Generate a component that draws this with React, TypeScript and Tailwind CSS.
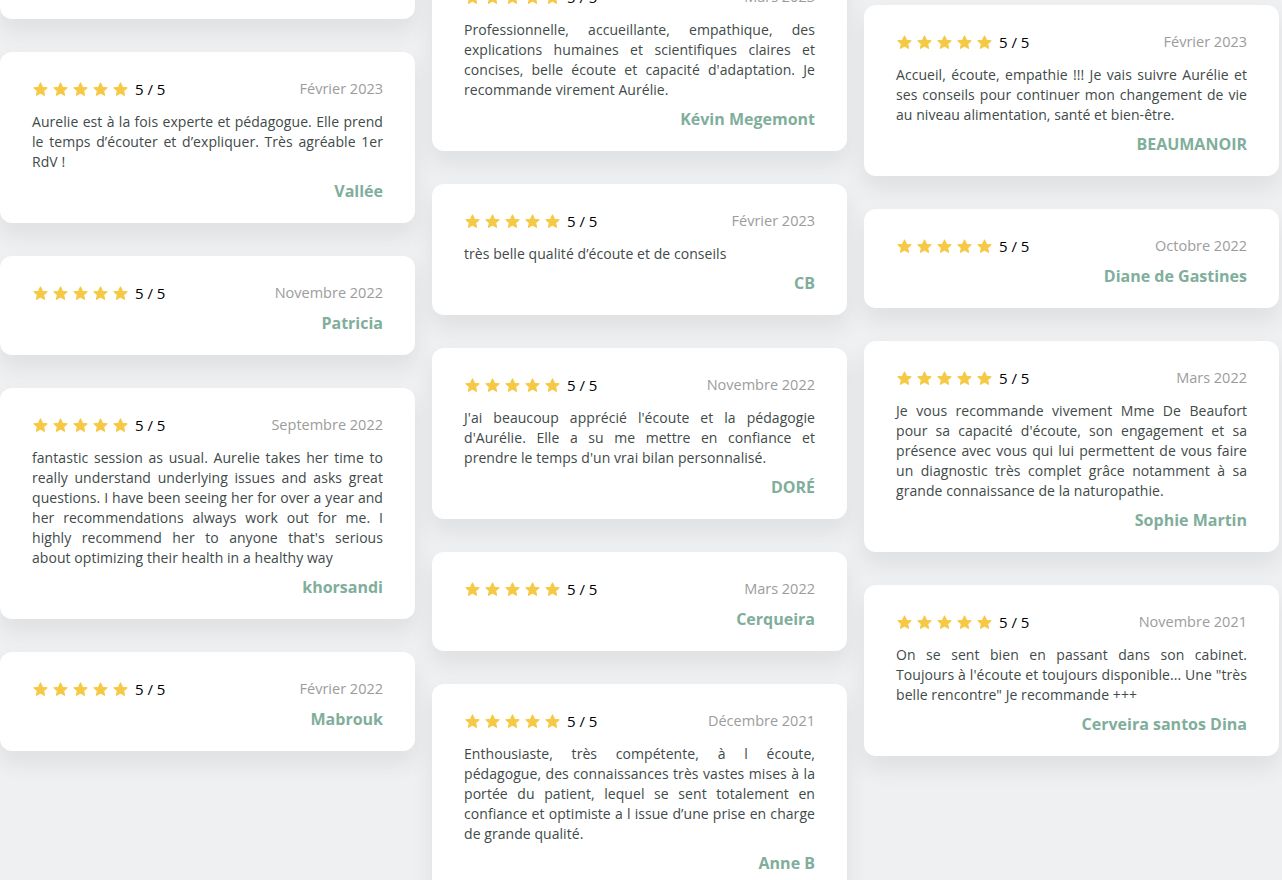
import React from "react";

type Review = {
  date: string;
  text?: string;
  name: string;
};

const col1: Review[] = [
  {
    date: "Mars 2023",
    text: "Très bonne écoute, des conseils adaptés et faciles à mettre en place au quotidien. Je recommande sans hésiter.",
    name: "Claire",
  },
  {
    date: "Février 2023",
    text: "Aurelie est à la fois experte et pédagogue. Elle prend le temps d’écouter et d’expliquer. Très agréable 1er RdV !",
    name: "Vallée",
  },
  { date: "Novembre 2022", name: "Patricia" },
  {
    date: "Septembre 2022",
    text: "fantastic session as usual. Aurelie takes her time to really understand underlying issues and asks great questions. I have been seeing her for over a year and her recommendations always work out for me. I highly recommend her to anyone that's serious about optimizing their health in a healthy way",
    name: "khorsandi",
  },
  { date: "Février 2022", name: "Mabrouk" },
];

const col2: Review[] = [
  {
    date: "Mars 2023",
    text: "Professionnelle, accueillante, empathique, des explications humaines et scientifiques claires et concises, belle écoute et capacité d'adaptation. Je recommande virement Aurélie.",
    name: "Kévin Megemont",
  },
  {
    date: "Février 2023",
    text: "très belle qualité d’écoute et de conseils",
    name: "CB",
  },
  {
    date: "Novembre 2022",
    text: "J'ai beaucoup apprécié l'écoute et la pédagogie d'Aurélie. Elle a su me mettre en confiance et prendre le temps d'un vrai bilan personnalisé.",
    name: "DORÉ",
  },
  { date: "Mars 2022", name: "Cerqueira" },
  {
    date: "Décembre 2021",
    text: "Enthousiaste, très compétente, à l écoute, pédagogue, des connaissances très vastes mises à la portée du patient, lequel se sent totalement en confiance et optimiste a l issue d’une prise en charge de grande qualité.",
    name: "Anne B",
  },
];

const col3: Review[] = [
  {
    date: "Février 2023",
    text: "Accueil, écoute, empathie !!! Je vais suivre Aurélie et ses conseils pour continuer mon changement de vie au niveau alimentation, santé et bien-être.",
    name: "BEAUMANOIR",
  },
  { date: "Octobre 2022", name: "Diane de Gastines" },
  {
    date: "Mars 2022",
    text: "Je vous recommande vivement Mme De Beaufort pour sa capacité d'écoute, son engagement et sa présence avec vous qui lui permettent de vous faire un diagnostic très complet grâce notamment à sa grande connaissance de la naturopathie.",
    name: "Sophie Martin",
  },
  {
    date: "Novembre 2021",
    text: "On se sent bien en passant dans son cabinet. Toujours à l'écoute et toujours disponible... Une \"très belle rencontre\" Je recommande +++",
    name: "Cerveira santos Dina",
  },
];

function StarIcon() {
  return (
    <svg width="17" height="17" viewBox="0 0 24 24" className="shrink-0">
      <path
        d="M12 2.8l2.75 5.95 6.45.72-4.8 4.4 1.33 6.38L12 17.02l-5.73 3.23 1.33-6.38-4.8-4.4 6.45-.72z"
        fill="#f6c945"
        stroke="#f6c945"
        strokeWidth="1.6"
        strokeLinejoin="round"
      />
    </svg>
  );
}

function ReviewCard({ review }: { review: Review }) {
  return (
    <div className="bg-white rounded-[12px] shadow-[0_12px_22px_rgba(40,50,60,0.09)] pt-[28px] pb-[22px] px-[32px]">
      <div className="flex items-center justify-between h-[18px]">
        <div className="flex items-center">
          <div className="flex items-center gap-[3px]">
            <StarIcon />
            <StarIcon />
            <StarIcon />
            <StarIcon />
            <StarIcon />
          </div>
          <span className="ml-[6px] text-[15px] text-black">5 / 5</span>
        </div>
        <span className="text-[14.5px] text-[#9c9c9c]">{review.date}</span>
      </div>
      {review.text ? (
        <p className="mt-[14px] text-[14px] leading-[20px] tracking-[0.06px] text-[#414a49] text-justify">
          {review.text}
        </p>
      ) : null}
      <div
        className={`${
          review.text ? "mt-[9px]" : "mt-[11px]"
        } text-right text-[16px] leading-[20px] font-bold text-[#80ae9b]`}
      >
        {review.name}
      </div>
    </div>
  );
}

export default function App() {
  return (
    <div className="w-[1282px] h-[880px] overflow-hidden bg-[#eff0f2] font-['Open_Sans',sans-serif]">
      <div className="grid grid-cols-[415px_415px_415px] gap-x-[17px]">
        <div className="flex flex-col gap-[33px] mt-[-152px]">
          {col1.map((r, i) => (
            <ReviewCard key={i} review={r} />
          ))}
        </div>
        <div className="flex flex-col gap-[33px] mt-[-40px]">
          {col2.map((r, i) => (
            <ReviewCard key={i} review={r} />
          ))}
        </div>
        <div className="flex flex-col gap-[33px] mt-[5px]">
          {col3.map((r, i) => (
            <ReviewCard key={i} review={r} />
          ))}
        </div>
      </div>
    </div>
  );
}
